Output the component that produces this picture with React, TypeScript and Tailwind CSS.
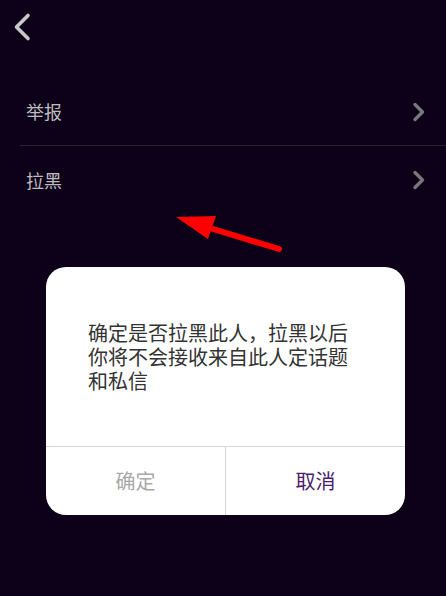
const font = { fontFamily: '"Noto Sans CJK SC", "Noto Sans", sans-serif' };

function Chevron() {
  return (
    <svg width="14" height="20" viewBox="0 0 14 20" className="shrink-0">
      <polyline points="3,2.5 10.5,10 3,17.5" fill="none" stroke="#777777" strokeWidth="3.4" strokeLinecap="round" strokeLinejoin="round" />
    </svg>
  );
}

function Row({ label, divider }: { label: string; divider?: boolean }) {
  return (
    <div className={`ml-5 flex h-[68px] items-center justify-between pl-1.5 pr-[20px] ${divider ? "border-b border-[#2a2030]" : ""}`}>
      <span className="text-[18px] text-[#bdbdbd]">{label}</span>
      <Chevron />
    </div>
  );
}

export default function App() {
  return (
    <div className="relative h-[596px] w-[446px] overflow-hidden bg-[#0d0019]" style={font}>
      {/* header */}
      <div className="flex h-[78px] items-start pl-[12px] pt-[12px]">
        <svg width="22" height="30" viewBox="0 0 22 30">
          <polyline points="16,3.5 4.5,15 16,26.5" fill="none" stroke="#c8c8c8" strokeWidth="3.6" strokeLinecap="round" strokeLinejoin="round" />
        </svg>
      </div>

      <Row label="举报" divider />
      <Row label="拉黑" />

      {/* annotation arrow */}
      <svg className="absolute left-0 top-0" width="446" height="596" viewBox="0 0 446 596">
        <line x1="279" y1="249" x2="200" y2="225" stroke="#ff0000" strokeWidth="6" strokeLinecap="round" />
        <polygon points="176,217 216,216 208,239" fill="#ff0000" />
      </svg>

      {/* dialog */}
      <div className="absolute left-[46px] top-[267px] w-[359px] overflow-hidden rounded-[20px] bg-white">
        <div className="flex h-[179px] items-center px-[42px]">
          <p className="text-[20px] leading-[24px] text-[#333333]">
            确定是否拉黑此人，拉黑以后你将不会接收来自此人定话题和私信
          </p>
        </div>
        <div className="flex h-[69px] border-t border-[#d6d6d6]">
          <button className="flex flex-1 items-center justify-center text-[20px] text-[#a8a8a8]">确定</button>
          <div className="w-px bg-[#d6d6d6]" />
          <button className="flex flex-1 items-center justify-center text-[20px] text-[#4b1c6b]">取消</button>
        </div>
      </div>
    </div>
  );
}
